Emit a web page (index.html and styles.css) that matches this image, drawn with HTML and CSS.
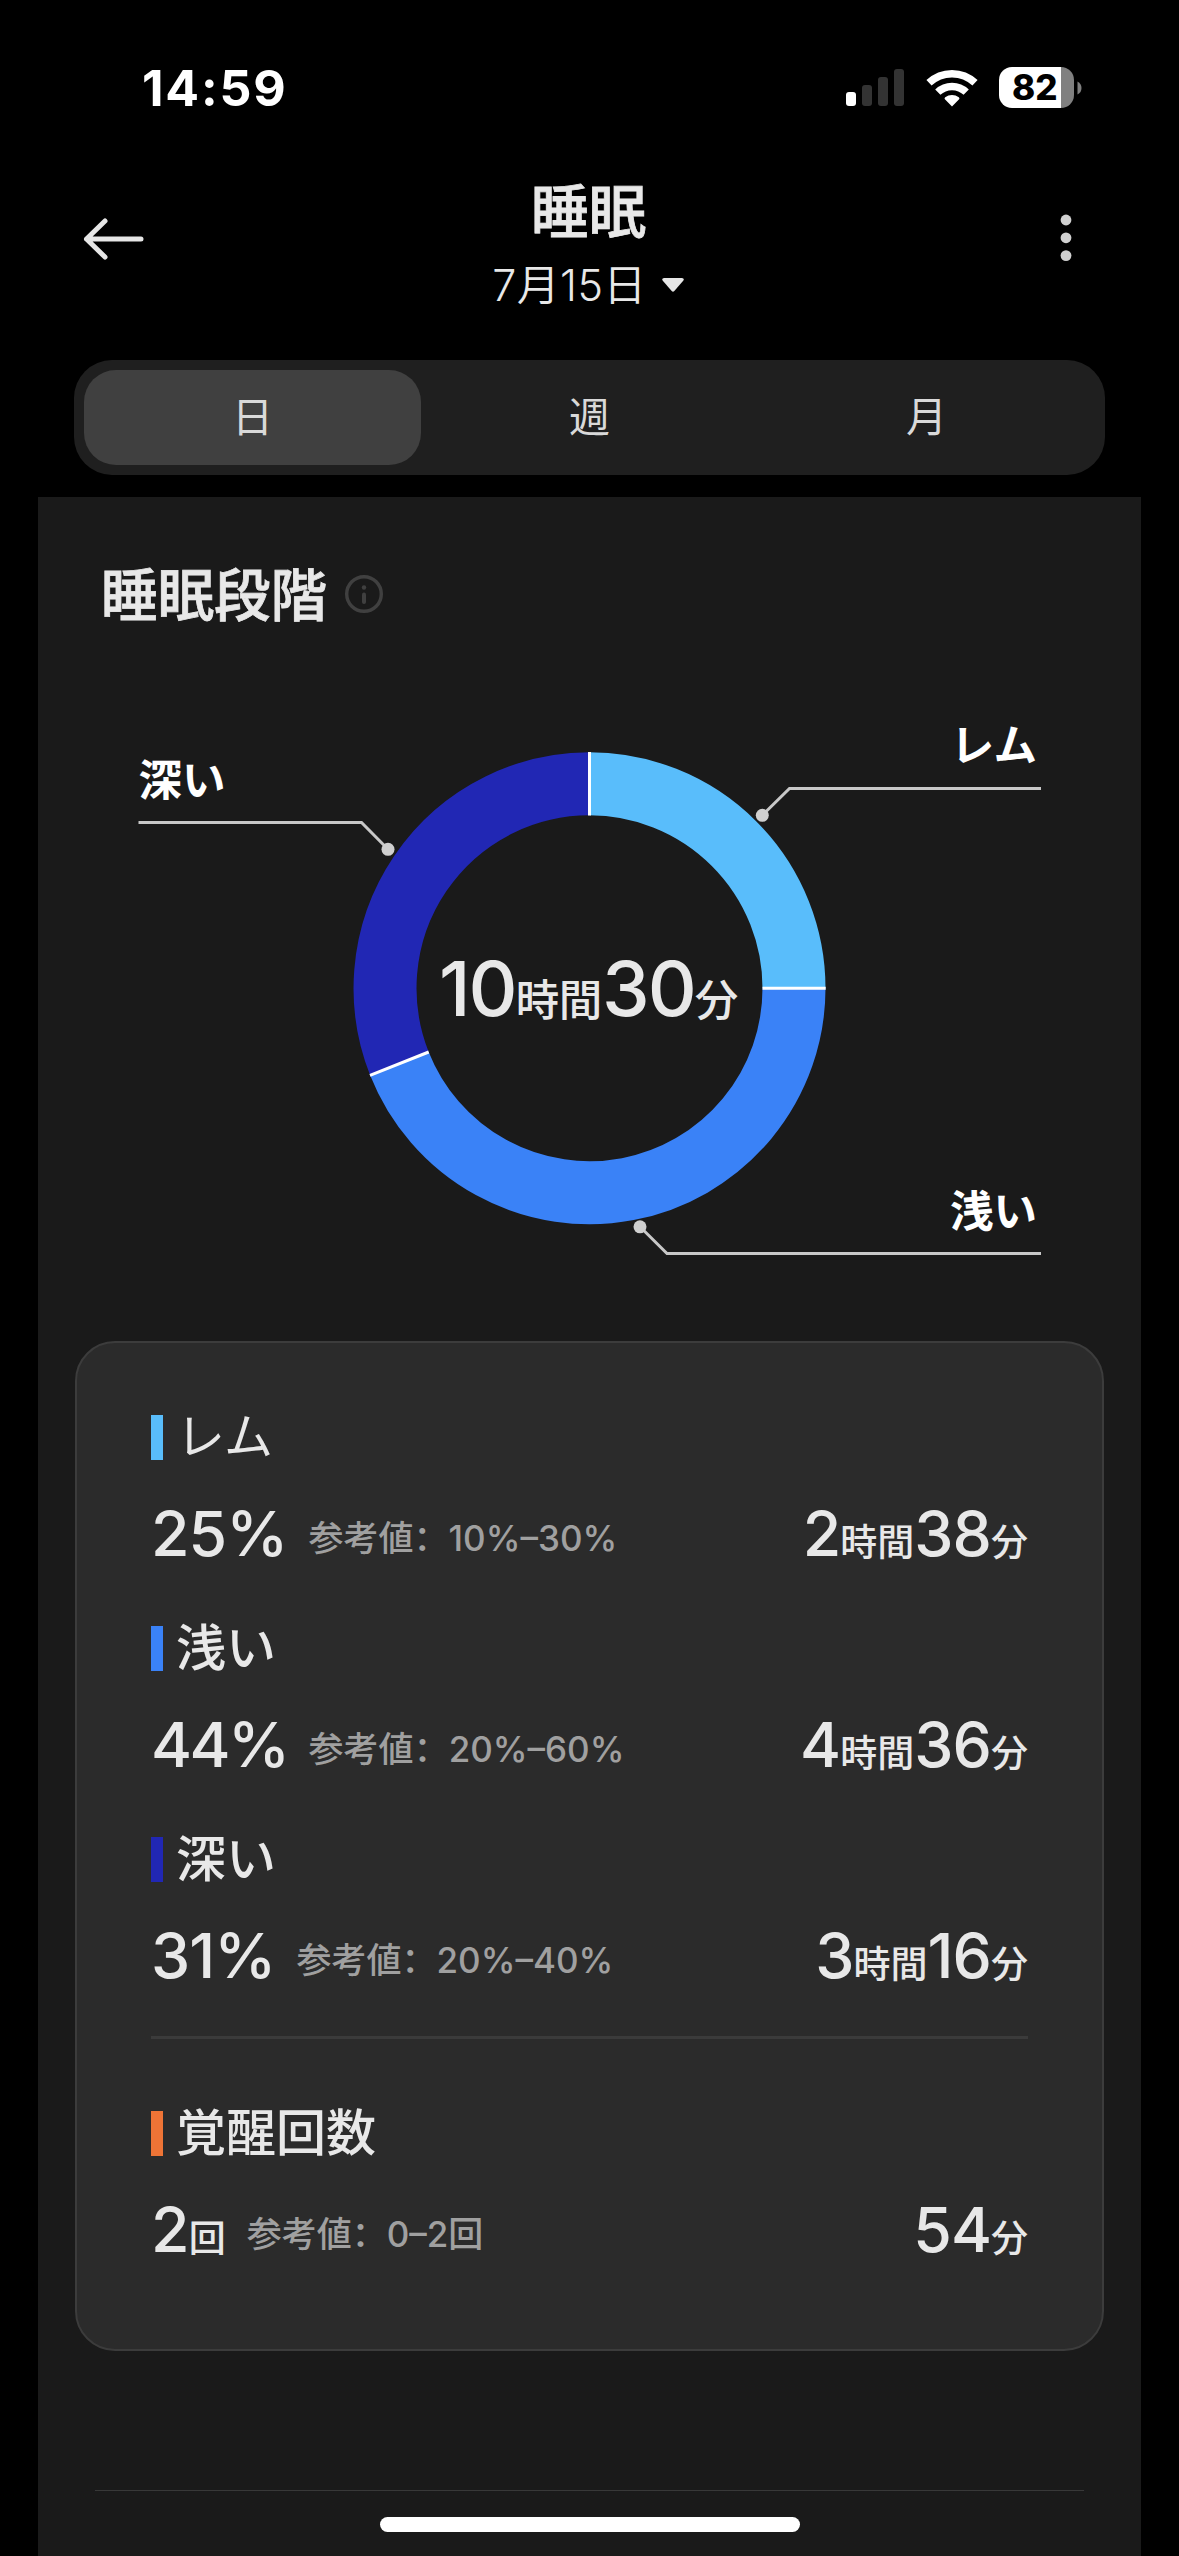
FILE: index.html
```html
<!DOCTYPE html>
<html lang="ja">
<head>
<meta charset="utf-8">
<title>睡眠</title>
<link rel="stylesheet" href="styles.css">
</head>
<body>
<div class="screen">
  <header class="status">
    <span class="clock">14:59</span>
    <div class="indicators">
      <svg class="signal" width="58" height="37" viewBox="0 0 58 37">
        <rect x="0" y="23" width="10" height="14" rx="3" fill="#fff"/>
        <rect x="16" y="16" width="10" height="21" rx="3" fill="#333"/>
        <rect x="32" y="8" width="10" height="29" rx="3" fill="#333"/>
        <rect x="48" y="0" width="10" height="37" rx="3" fill="#333"/>
      </svg>
      <svg class="wifi" width="52" height="38" viewBox="0 0 52 38">
        <path fill="#fff" d="M26 37.5 L18.9 30.2 Q18 29 19.2 28.200 A11.500 11.500 0 0 1 32.800 28.200 Q34 29 33.100 30.200 Z"/>
        <g fill="none" stroke="#fff" stroke-width="7.500">
          <path d="M11.800 23.100 A20.500 20.500 0 0 1 40.200 23.100"/>
          <path d="M3 13.800 A33.500 33.500 0 0 1 49 13.800"/>
        </g>
      </svg>
      <div class="battery"><span class="battery-body">82</span><svg width="5" height="14" viewBox="0 0 5 14"><path d="M0.500 0.500 Q4.500 2.500 4.500 7 Q4.500 11.500 0.500 13.500 Z" fill="#808080"/></svg></div>
    </div>
  </header>

  <nav class="topbar">
    <svg class="back" width="64" height="46" viewBox="0 0 64 46" fill="none" stroke="#e6e6e6" stroke-width="5" stroke-linecap="round" stroke-linejoin="round"><path d="M23 5 L4.500 23 L23 41 M4.500 23 H59"/></svg>
    <div class="heading">
      <h1 class="title">睡眠</h1>
      <div class="date">7月15日<svg class="caret" width="24" height="16" viewBox="0 0 24 16"><path d="M3 1 H21 Q24 1.500 22 4 L13.300 14 Q12 15.300 10.700 14 L2 4 Q0 1.500 3 1 Z" fill="#e6e6e6"/></svg></div>
    </div>
    <svg class="more" width="12" height="48" viewBox="0 0 12 48" fill="#d0d0d0"><circle cx="6" cy="6" r="5.400"/><circle cx="6" cy="23.800" r="5.400"/><circle cx="6" cy="41.600" r="5.400"/></svg>
  </nav>

  <div class="tabs">
    <span class="tab tab-on">日</span>
    <span class="tab">週</span>
    <span class="tab">月</span>
  </div>

  <main class="panel">
    <div class="section-head">
      <h2 class="section-title">睡眠段階</h2>
      <svg width="40" height="40" viewBox="0 0 40 40"><circle cx="20" cy="20" r="17.300" fill="none" stroke="#404040" stroke-width="3.400"/><circle cx="20" cy="13.500" r="2.200" fill="#404040"/><path d="M20 20.500 V28" stroke="#404040" stroke-width="4" stroke-linecap="round"/></svg>
    </div>

    <svg class="chart" width="1103" height="640" viewBox="38 680 1103 640">
      <g fill="none" stroke-width="63">
        <path stroke="#59bdfb" d="M589.500 783.800 A204.500 204.500 0 0 1 794 988.300"/>
        <path stroke="#3a82f7" d="M794 988.300 A204.500 204.500 0 0 1 399.400 1063.600"/>
        <path stroke="#2127b4" d="M399.400 1063.600 A204.500 204.500 0 0 1 589.500 783.800"/>
      </g>
      <path stroke="#fff" stroke-width="3" d="M589.500 752 V815.500 M762.500 988.300 H825.700 M370 1075.300 L428.700 1052"/>
      <g fill="none" stroke="#c8c8c8" stroke-width="3">
        <path d="M138.500 822.500 H361.500 L388 849.300"/>
        <path d="M1041 788.500 H789.500 L762.300 815.300"/>
        <path d="M1041 1253.500 H667 L640 1226.800"/>
      </g>
      <g fill="#d0d0d0">
        <circle cx="388" cy="849.300" r="6.500"/>
        <circle cx="762.300" cy="815.300" r="6.500"/>
        <circle cx="640" cy="1226.800" r="6.500"/>
      </g>
      <text class="callout" x="138.500" y="795.500">深い</text>
      <text class="callout callout-end" x="1037" y="761">レム</text>
      <text class="callout callout-end" x="1037" y="1226.500">浅い</text>
      <text class="total" x="588.500" y="1015.500">10<tspan class="total-unit">時間</tspan>30<tspan class="total-unit">分</tspan></text>
    </svg>

    <section class="card">
      <div class="stage">
        <div class="name"><i class="swatch rem"></i>レム</div>
        <div class="row"><span class="num">25%</span><span class="ref">参考値<span class="colon" lang="zh-CN">：</span>10%–30%</span><span class="num time">2<small>時間</small>38<small>分</small></span></div>
      </div>
      <div class="stage">
        <div class="name"><i class="swatch light"></i>浅い</div>
        <div class="row"><span class="num num-44">44%</span><span class="ref">参考値<span class="colon" lang="zh-CN">：</span>20%–60%</span><span class="num time">4<small>時間</small>36<small>分</small></span></div>
      </div>
      <div class="stage">
        <div class="name"><i class="swatch deep"></i>深い</div>
        <div class="row"><span class="num">31%</span><span class="ref">参考値<span class="colon" lang="zh-CN">：</span>20%–40%</span><span class="num time">3<small>時間</small>16<small>分</small></span></div>
      </div>
      <div class="stage awake-stage">
        <div class="name"><i class="swatch awake"></i>覚醒回数</div>
        <div class="row"><span class="num">2<small>回</small></span><span class="ref">参考値<span class="colon" lang="zh-CN">：</span>0–2回</span><span class="num time">54<small>分</small></span></div>
      </div>
    </section>

    <div class="rule"></div>
    <div class="home"></div>
  </main>
</div>
</body>
</html>
```
FILE: styles.css
```css
* { box-sizing: border-box; }
body {
  margin: 0;
  background: #000;
  color: #e8e8e8;
  font-family: Inter, "Noto Sans CJK JP", sans-serif;
}
h1, h2 { margin: 0; }
svg { display: block; flex: none; }
.screen {
  width: 1179px;
  height: 2556px;
  overflow: hidden;
  display: flex;
  flex-direction: column;
}

.status {
  height: 176px;
  padding: 67px 97px 0 142px;
  display: flex;
  justify-content: space-between;
  align-items: flex-start;
}
.clock {
  font-size: 50px;
  line-height: 42px;
  font-weight: 750;
  letter-spacing: 1.800px;
  color: #fff;
}
.indicators { display: flex; align-items: center; height: 41px; }
.wifi { margin-left: 22px; }
.battery { margin-left: 21px; display: flex; align-items: center; gap: 3px; }
.battery-body {
  width: 75px;
  height: 41px;
  padding-left: 13px;
  border-radius: 13px;
  background: linear-gradient(90deg, #fff 62px, #808080 62px);
  color: #000;
  font-size: 35px;
  line-height: 41px;
  font-weight: 850;
}

.topbar {
  height: 184px;
  padding: 0 107px 0 82px;
  display: grid;
  grid-template-columns: 64px 1fr 12px;
  align-items: start;
}
.back { margin-top: 40px; }
.heading { display: flex; flex-direction: column; align-items: center; margin-right: 29px; }
.title {
  font-size: 57.500px;
  line-height: 70px;
  font-weight: 500;
  -webkit-text-stroke: 0.8px #e8e8e8;
  margin-top: 1px;
}
.date {
  display: flex;
  align-items: center;
  gap: 14px;
  font-size: 43px;
  line-height: 60px;
  font-weight: 350;
  letter-spacing: 0.4px;
  margin-top: 8px;
}
.more { margin-top: 38px; }

.tabs {
  margin: 0 74px;
  height: 115px;
  padding: 10px;
  border-radius: 38px;
  background: #1f1f1f;
  display: grid;
  grid-template-columns: repeat(3, 1fr);
}
.tab {
  text-align: center;
  font-size: 41px;
  line-height: 95px;
  height: 95px;
  color: #d9d9d9;
  font-weight: 400;
}
.tab-on { background: #404040; border-radius: 32px; }

.panel {
  margin: 22px 38px 0;
  height: 2059px;
  background: #1a1a1a;
  display: flex;
  flex-direction: column;
}
.section-head {
  height: 183px;
  padding: 64px 0 0 63px;
  display: flex;
  align-items: flex-start;
  gap: 17px;
}
.section-title {
  font-size: 56.500px;
  line-height: 70px;
  font-weight: 500;
  -webkit-text-stroke: 0.8px #e8e8e8;
}
.section-head svg { margin-top: 13px; }

.chart { margin-bottom: 21px; }
.callout { font-size: 43.500px; font-weight: 700; fill: #fff; }
.callout-end { text-anchor: end; }
.total { font-size: 76px; font-weight: 500; fill: #e8e8e8; text-anchor: middle; letter-spacing: -2px; }
.total-unit { font-size: 43.500px; letter-spacing: -0.300px; }

.card {
  margin: 0 37px;
  height: 1010px;
  padding: 64px 74px 0;
  border: 2px solid #3c3c3c;
  border-radius: 40px;
  background: #2b2b2b;
}
.stage { margin-bottom: 49px; }
.name {
  display: flex;
  align-items: center;
  gap: 13px;
  font-size: 50px;
  line-height: 60px;
  font-weight: 500;
}
.stage:first-child .name { font-weight: 400; font-size: 49px; }
.swatch { width: 12px; height: 45px; }
.rem { background: #59bdfb; }
.light { background: #3a82f7; }
.deep { background: #2127b4; }
.awake { background: #ee7436; }
.row { display: flex; align-items: center; margin-top: 30px; height: 72px; }
.num { font-size: 62.500px; line-height: 72px; font-weight: 500; letter-spacing: -0.900px; }
.num-44 { letter-spacing: -2.500px; }
.num small { font-size: 37px; letter-spacing: 0; line-height: 1; }
.ref { margin: 10px 0 0 21px; font-size: 35px; line-height: 50px; color: #a0a0a0; font-weight: 450; }
.colon { font-family: "Noto Sans CJK SC", sans-serif; line-height: 1; }
.time { margin-left: auto; margin-right: 0; }
.awake-stage { border-top: 3px solid #3b3b3b; padding-top: 64px; margin: -4px 0 0; }

.rule { margin: 139px 57px 0; height: 1px; background: #383838; }
.home { margin: 26px auto 0; width: 420px; height: 15px; border-radius: 8px; background: #fff; }
```
